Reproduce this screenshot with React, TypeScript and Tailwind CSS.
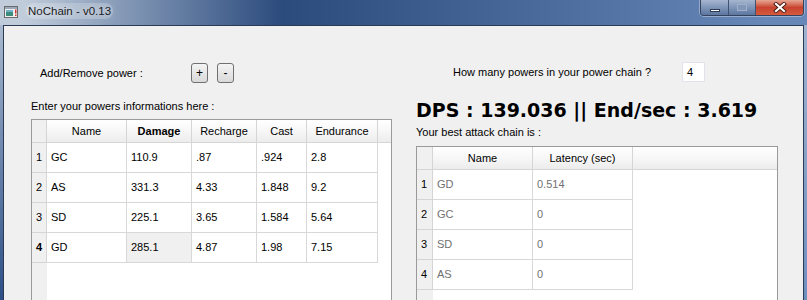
import React from 'react';

type Col = { label: string; w: number; bold?: boolean };

const powerCols: Col[] = [
  { label: 'Name', w: 80 },
  { label: 'Damage', w: 65, bold: true },
  { label: 'Recharge', w: 65 },
  { label: 'Cast', w: 50 },
  { label: 'Endurance', w: 71 },
];

const powerRows = [
  ['GC', '110.9', '.87', '.924', '2.8'],
  ['AS', '331.3', '4.33', '1.848', '9.2'],
  ['SD', '225.1', '3.65', '1.584', '5.64'],
  ['GD', '285.1', '4.87', '1.98', '7.15'],
];

const chainCols: Col[] = [
  { label: 'Name', w: 100 },
  { label: 'Latency (sec)', w: 100 },
];

const chainRows = [
  ['GD', '0.514'],
  ['GC', '0'],
  ['SD', '0'],
  ['AS', '0'],
];

function Grid({
  cols,
  rows,
  vw,
  width,
  dim,
  boldRow,
  current,
}: {
  cols: Col[];
  rows: string[][];
  vw: number;
  width: number;
  dim?: boolean;
  boldRow?: number;
  current?: [number, number];
}) {
  return (
    <div className="flex h-[200px] flex-col overflow-hidden border border-[#9a9a9a] bg-white" style={{ width }}>
      <div className="flex h-[23px] shrink-0 border-b border-[#d5d5d5] bg-gradient-to-b from-white via-[#f7f7f7] to-[#ececec]">
        <div className="shrink-0 border-r border-[#d5d5d5] bg-[#f0f0f0]" style={{ width: vw }} />
        {cols.map((c) => (
          <div
            key={c.label}
            className={`flex shrink-0 items-center justify-center border-r border-[#d5d5d5] text-black ${c.bold ? 'font-bold' : ''}`}
            style={{ width: c.w }}
          >
            {c.label}
          </div>
        ))}
        <div className="flex-1" />
      </div>
      {rows.map((r, i) => (
        <div key={i} className="flex h-[30px] shrink-0">
          <div
            className={`flex shrink-0 items-center border-r border-b border-[#d5d5d5] bg-[#f0f0f0] pl-[4px] text-black ${boldRow === i ? 'font-bold' : ''}`}
            style={{ width: vw }}
          >
            {i + 1}
          </div>
          {r.map((v, j) => (
            <div
              key={j}
              className={`flex shrink-0 items-center border-r border-b border-[#d8d8d8] pl-[4px] ${dim ? 'text-[#707070]' : 'text-black'} ${current && current[0] === i && current[1] === j ? 'bg-[#f0f0f0]' : ''}`}
              style={{ width: cols[j].w }}
            >
              {v}
            </div>
          ))}
        </div>
      ))}
      <div className="flex flex-1">
        <div className="shrink-0 bg-[#f0f0f0]" style={{ width: vw }} />
      </div>
    </div>
  );
}

function AppIcon() {
  return (
    <svg width="14" height="12" viewBox="0 0 14 12">
      <rect x="0.5" y="0.5" width="13" height="11" fill="#eeeeee" stroke="#6b6b6b" />
      <rect x="1" y="1" width="12" height="2" fill="#9aa9bb" />
      <rect x="2" y="4" width="7" height="6" fill="#3c8c7c" />
      <rect x="2" y="4" width="7" height="2" fill="#6fb2c9" />
      <rect x="11" y="3.5" width="1.5" height="4" fill="#d0342c" />
      <rect x="11" y="8.5" width="1.5" height="1.5" fill="#d0342c" />
    </svg>
  );
}

export default function App() {
  return (
    <div className="h-[300px] w-[807px] overflow-hidden bg-[#4a6a9c] font-['Liberation_Sans',Arial,sans-serif] text-[11px]">
      {/* title bar */}
      <div className="flex h-[25px] bg-linear-to-r from-[#c0ccda] from-3% via-[#2c4b7d] via-35% to-[#6787b8] to-95%">
        <div className="ml-[4px] mt-[6px]">
          <AppIcon />
        </div>
        <div className="ml-[8px] mt-[3px] h-[16px] rounded-full bg-white/20 px-[2px] text-[11.5px] leading-[16px] text-[#1b1b1b] [text-shadow:0_0_6px_rgba(255,255,255,0.9)]">
          NoChain - v0.13
        </div>
        <div className="ml-auto mr-[3px] flex h-[16px] overflow-hidden rounded-b-[4px] border border-t-0 border-[#33435f] shadow-[0_0_0_1px_rgba(255,255,255,0.35)]">
          <div className="flex w-[28px] items-end justify-center border-r border-[#3f5274] bg-gradient-to-b from-[#a6b6cf] via-[#7f95b8] to-[#5c769f] pb-[3px]">
            <div className="h-[3px] w-[10px] border border-[#2d3a52] bg-white" />
          </div>
          <div className="flex w-[27px] items-center justify-center border-r border-[#3f5274] bg-gradient-to-b from-[#a6b6cf] via-[#7f95b8] to-[#5c769f]">
            <div className="h-[7px] w-[10px] border border-[#9fb0c8] bg-[#8297b7]" />
          </div>
          <div className="flex w-[47px] items-center justify-center bg-gradient-to-b from-[#e5a593] via-[#c8432f] to-[#d65a3d]">
            <svg width="14" height="11" viewBox="0 0 14 11">
              <path d="M3 2 L11 9 M11 2 L3 9" stroke="#4a1a14" strokeWidth="4" strokeLinecap="square" />
              <path d="M3 2 L11 9 M11 2 L3 9" stroke="#ffffff" strokeWidth="2.2" strokeLinecap="square" />
            </svg>
          </div>
        </div>
      </div>

      {/* body */}
      <div className="flex h-[275px]">
        <div className="w-[3px] bg-gradient-to-b from-[#a9b9cf] to-[#2d4f86]" />
        <div className="flex flex-1 gap-[24px] border-x border-t border-[#2b3a55] bg-[#f0f0f0] pl-[27px]">
          {/* left column */}
          <div className="mt-[37px] flex w-[361px] flex-col">
            <div className="flex h-[20px] items-center">
              <div className="ml-[9px] w-[151px] leading-[16px]">Add/Remove power :</div>
              <button className="h-[20px] w-[17px] rounded-[3px] border border-[#707070] bg-gradient-to-b from-[#f4f4f4] to-[#d9d9d9] text-[12px] leading-none">
                +
              </button>
              <button className="ml-[9px] h-[20px] w-[17px] rounded-[3px] border border-[#707070] bg-gradient-to-b from-[#f4f4f4] to-[#d9d9d9] text-[12px] leading-none">
                -
              </button>
            </div>
            <div className="mt-[15px] h-[16px] leading-[16px]">Enter your powers informations here :</div>
            <div className="mt-[5px]">
              <Grid cols={powerCols} rows={powerRows} vw={15} width={361} boldRow={3} current={[3, 1]} />
            </div>
          </div>

          {/* right column */}
          <div className="mt-[36px] flex w-[362px] flex-col">
            <div className="flex h-[20px] items-center">
              <div className="ml-[37px] w-[229px] leading-[16px]">How many powers in your power chain ?</div>
              <div className="flex h-[20px] w-[23px] items-center border border-[#e2e3ea] bg-white pl-[4px]">4</div>
            </div>
            <div className="mt-[17px] h-[23px] whitespace-nowrap font-['DejaVu_Sans',Verdana,sans-serif] text-[19px] font-bold leading-[23px] text-black">
              DPS : 139.036 || End/sec : 3.619
            </div>
            <div className="mt-[2px] h-[16px] leading-[16px]">Your best attack chain is :</div>
            <div className="mt-[6px]">
              <Grid cols={chainCols} rows={chainRows} vw={16} width={362} dim />
            </div>
          </div>
        </div>
        <div className="w-[3px] bg-gradient-to-b from-[#9fb3cf] to-[#6f8fbf]" />
      </div>
    </div>
  );
}
